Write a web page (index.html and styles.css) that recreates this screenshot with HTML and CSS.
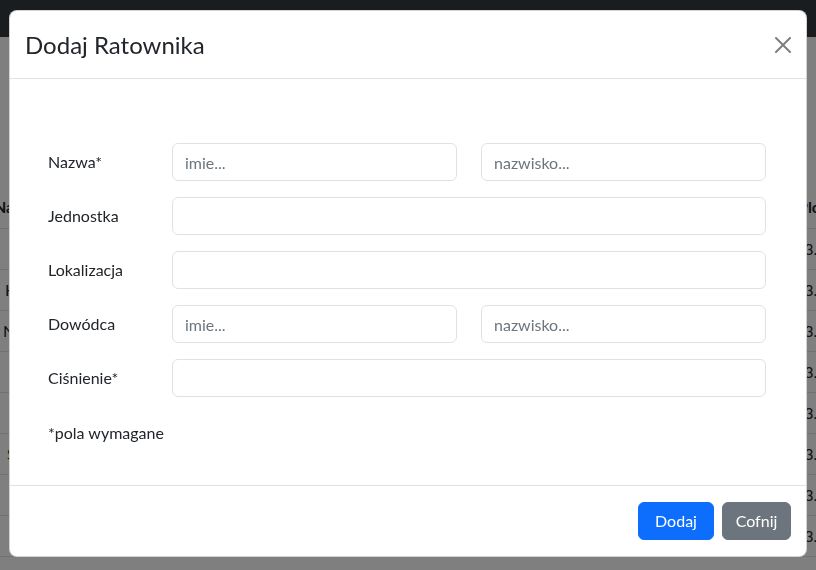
FILE: index.html
```html
<!DOCTYPE html>
<html lang="pl">
<head>
<meta charset="utf-8">
<title>Dodaj Ratownika</title>
<link rel="stylesheet" href="styles.css">
</head>
<body>
<nav class="navbar"></nav>
<main class="page">
  <table class="list">
    <colgroup><col class="w1"><col><col class="w3"></colgroup>
    <thead>
      <tr><th class="c1 h1">Nazwa</th><th class="mid"></th><th class="c3 h3">Plot</th></tr>
    </thead>
    <tbody>
      <tr><td class="c1"></td><td class="mid"></td><td class="c3">13.2.2024</td></tr>
      <tr><td class="c1 in2">Hala</td><td class="mid"></td><td class="c3">13.2.2024</td></tr>
      <tr><td class="c1 in1">Nowe</td><td class="mid"></td><td class="c3">13.2.2024</td></tr>
      <tr><td class="c1"></td><td class="mid"></td><td class="c3">13.2.2024</td></tr>
      <tr><td class="c1"></td><td class="mid"></td><td class="c3">13.2.2024</td></tr>
      <tr><td class="c1 in3">Sak</td><td class="mid"></td><td class="c3">13.2.2024</td></tr>
      <tr><td class="c1"></td><td class="mid"></td><td class="c3">13.2.2024</td></tr>
      <tr><td class="c1"></td><td class="mid"></td><td class="c3">13.2.2024</td></tr>
    </tbody>
  </table>
</main>

<div class="backdrop"></div>

<div class="modal-wrap">
  <div class="modal">
    <div class="modal-header">
      <h4 class="modal-title">Dodaj Ratownika</h4>
      <button class="btn-close" type="button" aria-label="Zamknij">
        <svg width="16" height="16" viewBox="0 0 16 16"><path fill="#000" d="M.293.293a1 1 0 0 1 1.414 0L8 6.586 14.293.293a1 1 0 1 1 1.414 1.414L9.414 8l6.293 6.293a1 1 0 0 1-1.414 1.414L8 9.414l-6.293 6.293a1 1 0 0 1-1.414-1.414L6.586 8 .293 1.707a1 1 0 0 1 0-1.414z"/></svg>
      </button>
    </div>
    <div class="modal-body">
      <form class="form-grid">
        <label class="lbl">Nazwa*</label>
        <input class="input" type="text" placeholder="imie...">
        <input class="input" type="text" placeholder="nazwisko...">

        <label class="lbl">Jednostka</label>
        <input class="input wide" type="text">

        <label class="lbl">Lokalizacja</label>
        <input class="input wide" type="text">

        <label class="lbl">Dowódca</label>
        <input class="input" type="text" placeholder="imie...">
        <input class="input" type="text" placeholder="nazwisko...">

        <label class="lbl">Ciśnienie*</label>
        <input class="input wide" type="text">
      </form>
      <p class="note">*pola wymagane</p>
    </div>
    <div class="modal-footer">
      <button class="btn btn-primary" type="button">Dodaj</button>
      <button class="btn btn-secondary" type="button">Cofnij</button>
    </div>
  </div>
</div>
</body>
</html>
```

FILE: styles.css
```css
* { box-sizing: border-box; }

html, body {
  margin: 0;
  padding: 0;
  height: 100%;
  overflow: hidden;
}

body {
  font-family: Lato, "Open Sans", "Liberation Sans", sans-serif;
  font-size: 16px;
  line-height: 24px;
  color: #212529;
  background: #fff;
}

.navbar {
  height: 37px;
  background: #343a40;
}

.page {
  padding-top: 150px;
  overflow: hidden;
}

.list {
  width: 100%;
  table-layout: fixed;
  border-collapse: collapse;
}

.list .w1 { width: 40px; }
.list .w3 { width: 16px; }

.list th,
.list td {
  padding: 8px 0;
  height: 41px;
  border-bottom: 1px solid #dee2e6;
  white-space: nowrap;
  overflow: hidden;
}

.list th { font-weight: 700; text-align: left; }

.list .c1 { text-align: left; }
.list .h1 { text-indent: -6px; }
.list .in1 { padding-left: 3px; }
.list .in2 { padding-left: 5px; }
.list .in3 { padding-left: 7px; }
.list .c3 { text-align: left; text-indent: -5px; }
.list .h3 { text-indent: -2px; }

.backdrop {
  position: fixed;
  inset: 0;
  background: rgba(0, 0, 0, 0.5);
}

.modal-wrap {
  position: fixed;
  inset: 0;
  padding: 10px 9px;
}

.modal {
  width: 798px;
  background: #fff;
  border: 1px solid rgba(0, 0, 0, 0.175);
  border-radius: 8px;
  overflow: hidden;
}

.modal-header {
  height: 68px;
  display: flex;
  align-items: center;
  justify-content: space-between;
  padding: 0 15px;
  border-bottom: 1px solid #dee2e6;
}

.modal-title {
  margin: 0;
  font-size: 24px;
  font-weight: 400;
  line-height: 29px;
  color: #212529;
}

.btn-close {
  width: 16px;
  height: 16px;
  padding: 0;
  margin: 0;
  border: 0;
  background: transparent;
  opacity: 0.5;
  display: flex;
  cursor: pointer;
}

.modal-body {
  padding: 64px 40px 40px 38px;
}

.form-grid {
  display: grid;
  grid-template-columns: 100px 285px 285px;
  column-gap: 24px;
  row-gap: 16px;
  align-items: center;
  margin: 0;
}

.lbl {
  font-size: 16px;
  line-height: 24px;
  color: #212529;
}

.input {
  height: 38px;
  width: 100%;
  padding: 6px 12px;
  font-family: inherit;
  font-size: 16px;
  line-height: 24px;
  color: #212529;
  background: #fff;
  border: 1px solid #dee2e6;
  border-radius: 6px;
  outline: none;
}

.input::placeholder { color: #6c757d; opacity: 1; }

.input.wide { grid-column: 2 / 4; }

.note {
  margin: 24px 0 0;
  line-height: 24px;
}

.modal-footer {
  height: 71px;
  display: flex;
  justify-content: flex-end;
  align-items: center;
  gap: 8px;
  padding: 0 15px;
  border-top: 1px solid #dee2e6;
}

.btn {
  height: 38px;
  font-family: inherit;
  font-size: 16px;
  line-height: 24px;
  color: #fff;
  border: 1px solid transparent;
  border-radius: 6px;
  padding: 6px 0;
  text-align: center;
  cursor: pointer;
}

.btn-primary { width: 76px; background: #0d6efd; border-color: #0d6efd; }
.btn-secondary { width: 69px; background: #6c757d; border-color: #6c757d; }
```
